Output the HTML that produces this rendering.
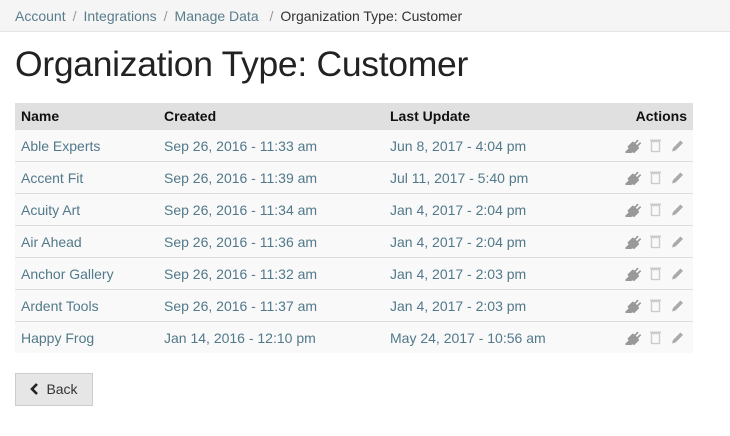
<!DOCTYPE html><html><head><style>
body{margin:0;width:730px;height:436px;background:#fff;font-family:"Liberation Sans",sans-serif;overflow:hidden}
.bc{height:32px;background:#f5f5f5;border-bottom:1px solid #e5e5e5;box-sizing:border-box;padding-left:15px;font-size:14px;line-height:32px;color:#5a7d8c}
.bc .s{color:#999;margin:0 7px}
.bc .c{color:#333}
h1{margin:0;position:absolute;left:15px;top:44px;font-size:35.5px;font-weight:300;color:#222;letter-spacing:-0.3px}
table{position:absolute;left:15px;top:103px;width:678px;border-collapse:collapse;font-size:14px}
th{background:#e0e0e0;height:26px;text-align:left;padding:0 6px;font-weight:bold;color:#111}
td{height:31px;border-top:1px solid #ddd;background:#f9f9f9;padding:0 6px;color:#52798a;line-height:14px}
.a{text-align:right;padding-right:6px}
td.a svg{vertical-align:middle;margin-top:-2px}
.btn{position:absolute;left:15px;top:373px;width:78px;height:33px;box-sizing:border-box;border:1px solid #ccc;background:#e6e6e6;font-size:14px;color:#333;line-height:31px;text-align:center}
</style></head><body>
<div class="bc">Account<span class="s">/</span>Integrations<span class="s">/</span>Manage Data<span class="s">&nbsp;/</span><span class="c">Organization Type: Customer</span></div>
<h1>Organization Type: Customer</h1>
<table>
<tr><th style="width:131px">Name</th><th style="width:214px">Created</th><th>Last Update</th><th class="a">Actions</th></tr>
<tr><td>Able Experts</td><td>Sep 26, 2016 - 11:33 am</td><td>Jun 8, 2017 - 4:04 pm</td><td class="a"><svg width="64" height="16" viewBox="0 0 64 16"><path d="M2 15l3.5-3.5-1-2 5-5 2 1 3-3 1.2 1.2-3 3 1.3 1.3 3-3 1.2 1.2-3 3 1 2-5 5-2-1-3.5 3.5z" fill="#999"/><rect x="28.5" y="4.5" width="8" height="10" fill="none" stroke="#ccc" stroke-width="1.4"/><rect x="27" y="2.5" width="11" height="1.6" fill="#ccc"/><path d="M49 14.5l1-3.5 7.5-7.5 2.5 2.5-7.5 7.5z" fill="#aaa"/></svg></td></tr>
<tr><td>Accent Fit</td><td>Sep 26, 2016 - 11:39 am</td><td>Jul 11, 2017 - 5:40 pm</td><td class="a"><svg width="64" height="16" viewBox="0 0 64 16"><path d="M2 15l3.5-3.5-1-2 5-5 2 1 3-3 1.2 1.2-3 3 1.3 1.3 3-3 1.2 1.2-3 3 1 2-5 5-2-1-3.5 3.5z" fill="#999"/><rect x="28.5" y="4.5" width="8" height="10" fill="none" stroke="#ccc" stroke-width="1.4"/><rect x="27" y="2.5" width="11" height="1.6" fill="#ccc"/><path d="M49 14.5l1-3.5 7.5-7.5 2.5 2.5-7.5 7.5z" fill="#aaa"/></svg></td></tr>
<tr><td>Acuity Art</td><td>Sep 26, 2016 - 11:34 am</td><td>Jan 4, 2017 - 2:04 pm</td><td class="a"><svg width="64" height="16" viewBox="0 0 64 16"><path d="M2 15l3.5-3.5-1-2 5-5 2 1 3-3 1.2 1.2-3 3 1.3 1.3 3-3 1.2 1.2-3 3 1 2-5 5-2-1-3.5 3.5z" fill="#999"/><rect x="28.5" y="4.5" width="8" height="10" fill="none" stroke="#ccc" stroke-width="1.4"/><rect x="27" y="2.5" width="11" height="1.6" fill="#ccc"/><path d="M49 14.5l1-3.5 7.5-7.5 2.5 2.5-7.5 7.5z" fill="#aaa"/></svg></td></tr>
<tr><td>Air Ahead</td><td>Sep 26, 2016 - 11:36 am</td><td>Jan 4, 2017 - 2:04 pm</td><td class="a"><svg width="64" height="16" viewBox="0 0 64 16"><path d="M2 15l3.5-3.5-1-2 5-5 2 1 3-3 1.2 1.2-3 3 1.3 1.3 3-3 1.2 1.2-3 3 1 2-5 5-2-1-3.5 3.5z" fill="#999"/><rect x="28.5" y="4.5" width="8" height="10" fill="none" stroke="#ccc" stroke-width="1.4"/><rect x="27" y="2.5" width="11" height="1.6" fill="#ccc"/><path d="M49 14.5l1-3.5 7.5-7.5 2.5 2.5-7.5 7.5z" fill="#aaa"/></svg></td></tr>
<tr><td>Anchor Gallery</td><td>Sep 26, 2016 - 11:32 am</td><td>Jan 4, 2017 - 2:03 pm</td><td class="a"><svg width="64" height="16" viewBox="0 0 64 16"><path d="M2 15l3.5-3.5-1-2 5-5 2 1 3-3 1.2 1.2-3 3 1.3 1.3 3-3 1.2 1.2-3 3 1 2-5 5-2-1-3.5 3.5z" fill="#999"/><rect x="28.5" y="4.5" width="8" height="10" fill="none" stroke="#ccc" stroke-width="1.4"/><rect x="27" y="2.5" width="11" height="1.6" fill="#ccc"/><path d="M49 14.5l1-3.5 7.5-7.5 2.5 2.5-7.5 7.5z" fill="#aaa"/></svg></td></tr>
<tr><td>Ardent Tools</td><td>Sep 26, 2016 - 11:37 am</td><td>Jan 4, 2017 - 2:03 pm</td><td class="a"><svg width="64" height="16" viewBox="0 0 64 16"><path d="M2 15l3.5-3.5-1-2 5-5 2 1 3-3 1.2 1.2-3 3 1.3 1.3 3-3 1.2 1.2-3 3 1 2-5 5-2-1-3.5 3.5z" fill="#999"/><rect x="28.5" y="4.5" width="8" height="10" fill="none" stroke="#ccc" stroke-width="1.4"/><rect x="27" y="2.5" width="11" height="1.6" fill="#ccc"/><path d="M49 14.5l1-3.5 7.5-7.5 2.5 2.5-7.5 7.5z" fill="#aaa"/></svg></td></tr>
<tr><td>Happy Frog</td><td>Jan 14, 2016 - 12:10 pm</td><td>May 24, 2017 - 10:56 am</td><td class="a"><svg width="64" height="16" viewBox="0 0 64 16"><path d="M2 15l3.5-3.5-1-2 5-5 2 1 3-3 1.2 1.2-3 3 1.3 1.3 3-3 1.2 1.2-3 3 1 2-5 5-2-1-3.5 3.5z" fill="#999"/><rect x="28.5" y="4.5" width="8" height="10" fill="none" stroke="#ccc" stroke-width="1.4"/><rect x="27" y="2.5" width="11" height="1.6" fill="#ccc"/><path d="M49 14.5l1-3.5 7.5-7.5 2.5 2.5-7.5 7.5z" fill="#aaa"/></svg></td></tr>
</table>
<div class="btn"><svg width="10" height="12" viewBox="0 0 10 12" style="vertical-align:-1px;margin-right:6px"><path d="M7 1L2 6l5 5" fill="none" stroke="#222" stroke-width="2.6"/></svg>Back</div>
</body></html>
